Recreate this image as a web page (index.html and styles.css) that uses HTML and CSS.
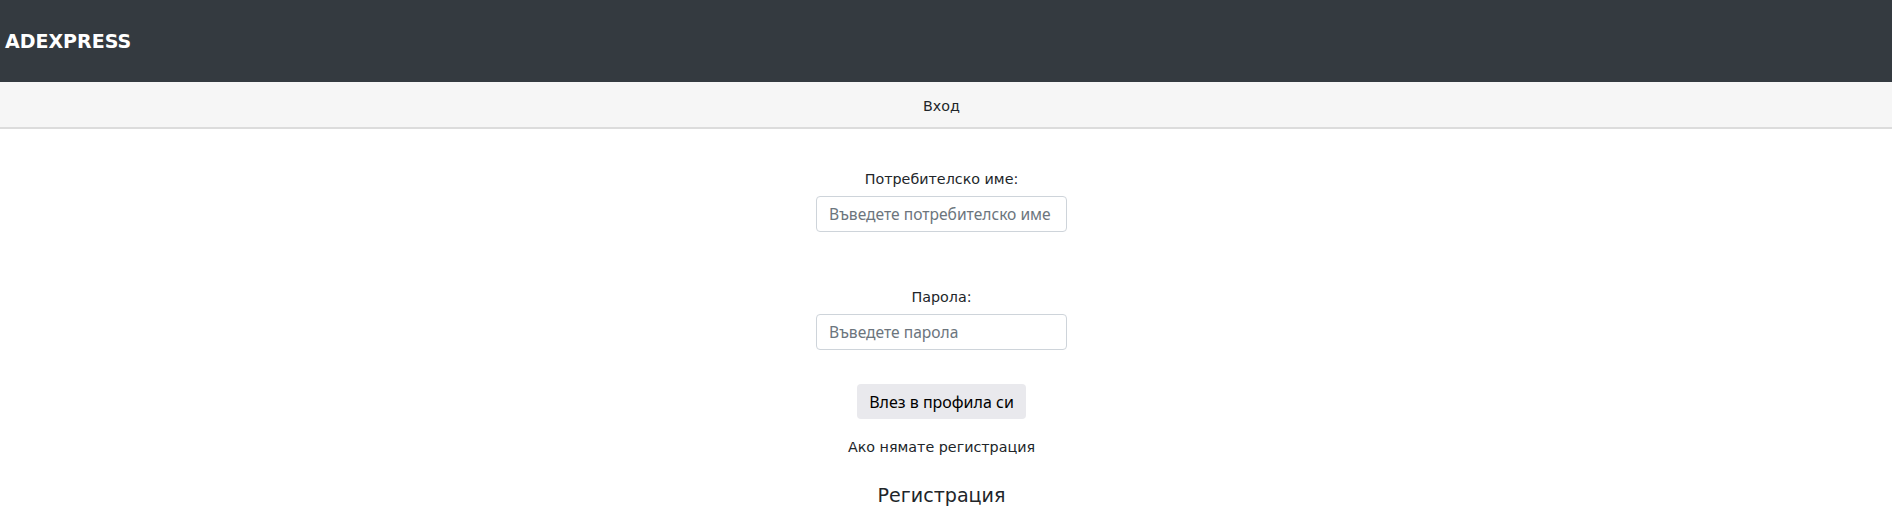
FILE: index.html
```html
<!DOCTYPE html>
<html lang="bg">
<head>
<meta charset="utf-8">
<title>ADEXPRESS</title>
<link rel="stylesheet" href="styles.css">
</head>
<body>
<header class="topbar">
  <div class="brand">ADEXPRESS</div>
</header>
<nav class="subnav">
  <span class="subnav-item">Вход</span>
</nav>
<main class="login">
  <form class="login-form">
    <div class="field">
      <label class="field-label" for="user">Потребителско име:</label>
      <input class="field-input" id="user" type="text" placeholder="Въведете потребителско име">
    </div>
    <div class="field field-second">
      <label class="field-label" for="pass">Парола:</label>
      <input class="field-input" id="pass" type="password" placeholder="Въведете парола">
    </div>
    <button class="submit" type="button">Влез в профила си</button>
  </form>
  <p class="hint">Ако нямате регистрация</p>
  <h3 class="register">Регистрация</h3>
</main>
</body>
</html>
```

FILE: styles.css
```css
html, body {
  margin: 0;
  padding: 0;
  background: #ffffff;
}

body {
  font-family: "DejaVu Sans", Verdana, sans-serif;
  font-size: 14.3px;
  color: #212529;
}

.topbar {
  height: 82px;
  background: #343a40;
  display: flex;
  align-items: center;
  padding-left: 5px;
}

.brand {
  color: #ffffff;
  font-weight: bold;
  font-size: 19px;
  line-height: 24px;
}

.subnav {
  height: 45px;
  background: #f6f6f6;
  border-bottom: 2px solid #dcdcdc;
  display: flex;
  align-items: center;
  justify-content: center;
  padding-right: 9px;
}

.subnav-item {
  line-height: 18px;
  color: #212529;
  padding-top: 2px;
}

.login {
  display: flex;
  flex-direction: column;
  align-items: center;
  padding-right: 9px;
  padding-top: 41px;
}

.login-form {
  display: flex;
  flex-direction: column;
  align-items: center;
}

.field {
  display: flex;
  flex-direction: column;
  align-items: center;
  gap: 8px;
}

.field-second {
  margin-top: 56px;
}

.field-label {
  line-height: 18px;
}

.field-input {
  box-sizing: border-box;
  width: 251px;
  height: 36px;
  padding: 0 12px;
  border: 1px solid #ced4da;
  border-radius: 4px;
  font-family: "Noto Sans", "Open Sans", sans-serif;
  font-size: 15.6px;
  color: #212529;
  background: #fff;
}

.field-input::placeholder {
  color: #6c757d;
}

.submit {
  margin-top: 34px;
  height: 35px;
  padding: 0 12px;
  border: none;
  border-radius: 4px;
  background: #e9e9ed;
  color: #000;
  font-family: "Noto Sans", "Open Sans", sans-serif;
  font-size: 16px;
}

.hint {
  margin: 19px 0 0;
  line-height: 18px;
}

.register {
  margin: 28px 0 0;
  font-size: 19.1px;
  font-weight: normal;
  line-height: 24px;
}
```
